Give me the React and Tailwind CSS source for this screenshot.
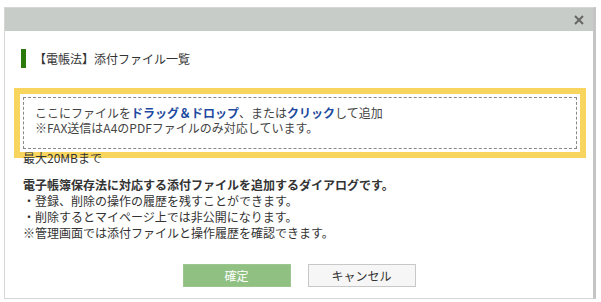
import { useState } from "react";

function App() {
  const [hover, setHover] = useState(false);

  return (
    <div
      className="w-[601px] h-[302px] bg-white pt-[7px] pl-[4px]"
      style={{ fontFamily: '"Noto Sans CJK JP", "Noto Sans", sans-serif' }}
    >
      <div className="w-[592px] h-[292px] border border-[#d6d6d6] border-r-[3px] border-r-[#c4c4c4] flex flex-col bg-white">
        {/* header */}
        <div className="h-[23px] bg-[#c8ccc8] flex items-center justify-end pr-[9px]">
          <svg width="10" height="10" viewBox="0 0 10 10">
            <path d="M1 1 L9 9 M9 1 L1 9" stroke="#666" strokeWidth="2" />
          </svg>
        </div>

        {/* body */}
        <div className="flex-1 flex flex-col">
          <div className="flex items-center mt-[18px] ml-[16px]">
            <div className="w-[5px] h-[19px] bg-[#2b7a0b]" />
            <span className="ml-[8px] text-[12px] text-[#333]">【電帳法】添付ファイル一覧</span>
          </div>

          <div
            className="mt-[29px] ml-[18px] w-[554px] h-[52px] border border-dashed border-[#888] outline-[6px] outline-solid outline-[#f8d55e] outline-offset-[3px] pl-[11px] pt-[7px] text-[12px] leading-[15px] text-[#444] cursor-pointer"
            onMouseEnter={() => setHover(true)}
            onMouseLeave={() => setHover(false)}
          >
            <p>
              ここにファイルを<b className="text-[#1d4aa0]">ドラッグ＆ドロップ</b>、または
              <b className="text-[#1d4aa0]">クリック</b>して追加
            </p>
            <p>※FAX送信はA4のPDFファイルのみ対応しています。</p>
          </div>

          <p className="mt-[1px] ml-[18px] text-[12px] leading-[16px] text-[#333]">最大20MBまで</p>

          <div className="mt-[11px] ml-[18px] text-[12px] leading-[16px] text-[#333]">
            <p className="font-bold">電子帳簿保存法に対応する添付ファイルを追加するダイアログです。</p>
            <p>・登録、削除の操作の履歴を残すことができます。</p>
            <p>・削除するとマイページ上では非公開になります。</p>
            <p>※管理画面では添付ファイルと操作履歴を確認できます。</p>
          </div>

          <div className="flex justify-center gap-[17px] mt-[23px]">
            <button className="w-[108px] h-[23px] bg-[#91c083] text-white text-[12px] border border-[#9cc590]">
              確定
            </button>
            <button className={"w-[108px] h-[23px] text-[12px] text-[#333] border border-[#c8c8c8] " + (hover ? "bg-[#eeeeee]" : "bg-[#f6f6f6]")}>
              キャンセル
            </button>
          </div>
        </div>
      </div>
    </div>
  );
}

export default App;
